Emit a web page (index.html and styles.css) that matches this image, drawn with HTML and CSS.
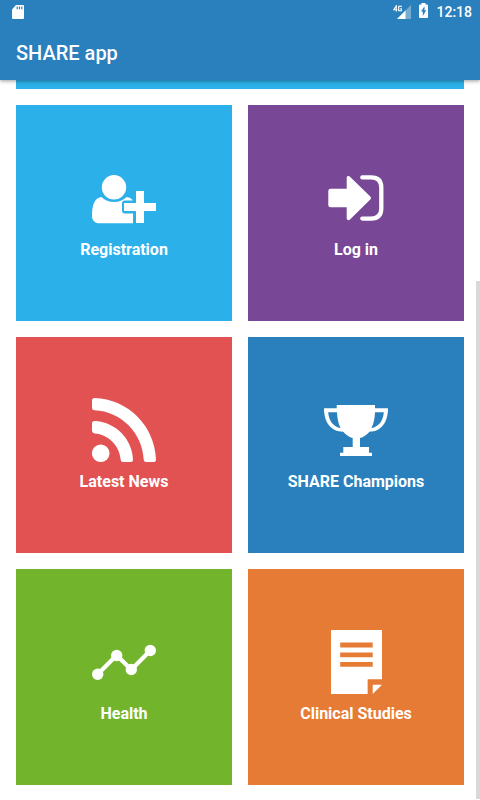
FILE: index.html
```html
<!DOCTYPE html>
<html lang="en">
<head>
<meta charset="utf-8">
<meta name="viewport" content="width=device-width, initial-scale=1">
<title>SHARE app</title>
<link rel="stylesheet" href="styles.css">
</head>
<body>
<header class="app-bar">
  <div class="status">
    <svg class="sd" width="12" height="14" viewBox="0 0 12 14" aria-hidden="true"><path fill="#fff" d="M4 0H11a1 1 0 0 1 1 1v12a1 1 0 0 1-1 1H1a1 1 0 0 1-1-1V4.500Z"/><path stroke="#2a80bd" stroke-width="1.200" d="M5.200 1.500v2.700M7.500 1.500v2.700M9.800 1.500v2.700"/></svg>
    <svg class="signal" width="18" height="14" viewBox="0 0 18 14" aria-hidden="true"><path fill="#fff" fill-opacity=".35" d="M18 0v14H4Z"/><path fill="#fff" d="M12.500 5.500V14H4Z"/><path fill="#2a80bd" d="M0 0h9.500v7H0Z"/><path fill="none" stroke="#fff" stroke-width="1.100" d="M3.300 6.500V.8L.9 4.700h3.500M8.300 2V1.200H5.700v4.600h2.600V3.700H7.200"/></svg>
    <svg class="battery" width="9" height="15" viewBox="0 0 9 15" aria-hidden="true"><path fill="#fff" d="M2.500 0h4v1.500H8a1 1 0 0 1 1 1V14a1 1 0 0 1-1 1H1a1 1 0 0 1-1-1V2.500a1 1 0 0 1 1-1h1.500Z"/><path fill="#2a80bd" d="M5.500 3.200 2 8.600h1.800v4.400L7.200 7.300H5.500Z"/></svg>
    <time class="clock">12:18</time>
  </div>
  <h1 class="title">SHARE app</h1>
</header>
<main class="content">
  <div class="banner"></div>
  <nav class="tiles">
    <a class="tile cyan" href="#registration">
      <svg class="icon" viewBox="0 0 64 64" aria-hidden="true"><g fill="#fff"><path d="M9.500 31C13 34.500 17 36 22 36s9-1.500 12.500-5c3 .3 5 1.500 6.500 3.500H33a3 3 0 0 0-3 3v7a3 3 0 0 0 3 3h8V57.300H7.500C3 57.300 0 54.500 0 50 0 40 2 32 9.500 31Z"/><circle cx="22" cy="21.300" r="12.200"/><path d="M44 25h8v12h12v8H52v12h-8V45H32v-8h12Z"/></g></svg>
      <span class="label">Registration</span>
    </a>
    <a class="tile purple" href="#login">
      <svg class="icon" viewBox="0 0 64 64" aria-hidden="true"><path fill="#fff" d="M6.500 22.700h16.200v-11c0-2 2-2.300 3.300-1L46.300 30.500q1.500 1.500 0 3L26 53.500c-1.300 1.200-3.300.8-3.300-1.200v-11H6.500q-2.200 0-2.200-2.200V24.900q0-2.200 2.200-2.200Z"/><path fill="none" stroke="#fff" stroke-width="4.300" stroke-linecap="round" d="M38.300 11.400H47q10.300 0 10.300 10.300v20.600q0 10.300-10.300 10.300h-8.700"/></svg>
      <span class="label">Log in</span>
    </a>
    <a class="tile red" href="#news">
      <svg class="icon" viewBox="0 0 64 64" aria-hidden="true"><g fill="#fff"><circle cx="8.700" cy="55.200" r="8.800"/><path d="M0 25.500Q0 23 2.500 23C23.500 24 40 40.500 41 61.500q0 2.500-2.500 2.500h-7.300q-2.400 0-2.600-2.500C27.500 47.500 16.500 36.500 2.500 35.400Q0 35.200 0 32.800Z"/><path d="M0 2.500Q0 0 2.500 0C36 1 63 28 64 61.500q0 2.500-2.500 2.500h-7.200q-2.500 0-2.600-2.500C50.500 35 29 13.500 2.500 12.300Q0 12.200 0 9.700Z"/></g></svg>
      <span class="label">Latest News</span>
    </a>
    <a class="tile blue" href="#champions">
      <svg class="icon" viewBox="0 0 64 64" aria-hidden="true"><path fill="#fff" d="M12.700 7H51v3.300h13C64 24 57.500 33.700 45.500 33.700 42.500 37.300 39.500 39 36 40v9h9v5.700h3V58H16v-3.300h3.300V49h9.400v-9c-3.500-1-6.500-2.700-9.500-6.300C6.500 33.700 0 24 0 10.300h12.700Z"/><path fill="#2a80bd" d="M4.200 14.200h8.800c.3 6.500 1.200 11 3.600 15.800C9.500 29 4.700 22.500 4.200 14.200ZM59.800 14.200H51c-.3 6.500-1.200 11-3.600 15.800 7.100-1 11.900-7.500 12.400-15.800Z"/></svg>
      <span class="label">SHARE Champions</span>
    </a>
    <a class="tile green" href="#health">
      <svg class="icon" viewBox="0 0 64 64" aria-hidden="true"><path fill="none" stroke="#fff" stroke-width="4.200" d="M5.700 44.300 24.700 25.300 39.300 39.700 58.300 20.500"/><g fill="#fff"><circle cx="5.700" cy="44.300" r="5.700"/><circle cx="24.700" cy="25.500" r="5.700"/><circle cx="39.300" cy="39.500" r="5.700"/><circle cx="58.300" cy="20.500" r="5.700"/></g></svg>
      <span class="label">Health</span>
    </a>
    <a class="tile orange" href="#studies">
      <svg class="icon" viewBox="0 0 64 64" aria-hidden="true"><path fill="#fff" d="M7 0h51v49.500H43.800V64H7Z"/><path fill="#e67b35" d="M43.800 49.500H58V64H43.800Z"/><path fill="#fff" d="M36 49.500h.8V64H36ZM48.700 54.700H58L48.700 64Z"/><path stroke="#e67b35" stroke-width="4.800" d="M16.200 15h32.500M16.200 24.800h32.500M16.200 34.400h32.500"/></svg>
      <span class="label">Clinical Studies</span>
    </a>
  </nav>
  <div class="scrollbar"></div>
</main>
</body>
</html>
```
FILE: styles.css
```css
* {
  box-sizing: border-box;
}

body {
  margin: 0;
  height: 100vh;
  display: flex;
  flex-direction: column;
  overflow: hidden;
  background: #fff;
  font-family: Roboto, "Liberation Sans", sans-serif;
}

.app-bar {
  position: relative;
  z-index: 1;
  flex: none;
  background: #2a80bd;
  color: #fff;
  box-shadow: 0 1px 4px rgba(0, 0, 0, 0.4);
}

.status {
  display: flex;
  align-items: center;
  height: 24px;
  padding: 0 8px 0 12px;
}

.signal {
  margin-left: auto;
}

.battery {
  margin: 0 8px 3px;
}

.clock {
  font-size: 14px;
  font-weight: 500;
  line-height: 24px;
}

.title {
  margin: 0;
  padding: 2px 16px 0;
  font-size: 20px;
  font-weight: 500;
  line-height: 54px;
}

.content {
  position: relative;
  flex: 1;
  min-height: 0;
  padding: 0 16px;
  overflow: hidden;
}

.banner {
  height: 9px;
  margin-bottom: 16px;
  background: #2cb0e9;
}

.tiles {
  display: grid;
  grid-template-columns: 1fr 1fr;
  gap: 16px;
}

.tile {
  display: flex;
  flex-direction: column;
  align-items: center;
  justify-content: center;
  gap: 10px;
  aspect-ratio: 1;
  color: #fff;
  text-decoration: none;
}

.icon {
  width: 64px;
  height: 64px;
}

.label {
  font-size: 16px;
  font-weight: 700;
  line-height: 20px;
}

.cyan {
  background: #2cb0e9;
}

.purple {
  background: #784896;
}

.red {
  background: #e25252;
}

.blue {
  background: #2a80bd;
}

.green {
  background: #72b52c;
}

.orange {
  background: #e67b35;
}

.scrollbar {
  position: absolute;
  top: 201px;
  right: 0;
  bottom: 1px;
  width: 4px;
  background: #d9d9d9;
}
```
